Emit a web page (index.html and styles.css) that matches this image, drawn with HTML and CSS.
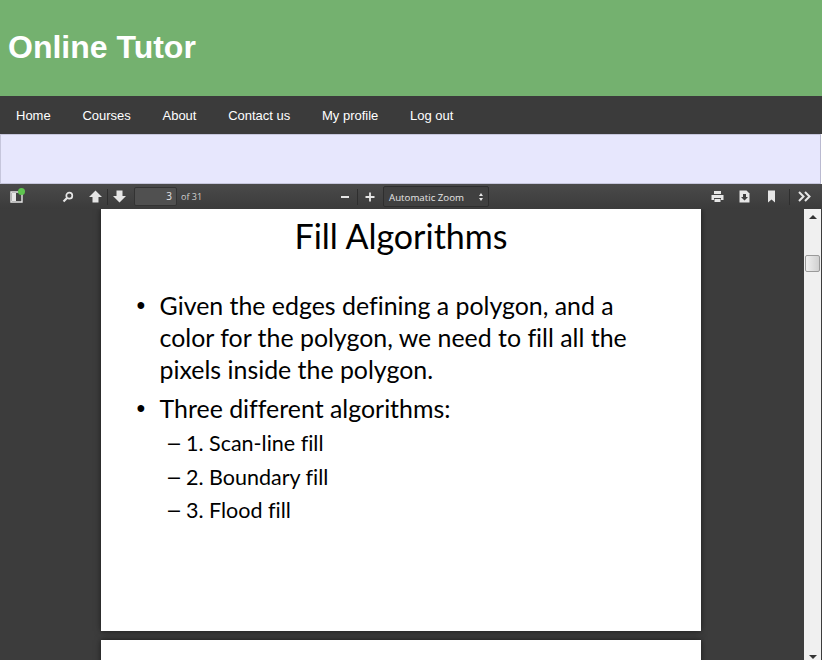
FILE: index.html
```html
<!DOCTYPE html>
<html>
<head>
    <meta charset="utf-8">
    <title>Online Tutor</title>
    <link rel="stylesheet" href="styles.css">
</head>
<body>
    <div class="header">
        <h1>Online Tutor</h1>
    </div>

    <ul class="nav">
        <li><a href="#">Home</a></li>
        <li><a href="#">Courses</a></li>
        <li><a href="#">About</a></li>
        <li><a href="#">Contact us</a></li>
        <li><a href="#">My profile</a></li>
        <li><a href="#">Log out</a></li>
    </ul>

    <div class="notice"></div>

    <div class="viewer">
        <div class="toolbar">
            <div class="tool-group tool-left">
                <button class="tool sidebar-btn">
                    <svg width="13" height="13" viewBox="0 0 13 13"><path d="M1 2h11v10H1z" fill="none" stroke="#e6e6e6" stroke-width="1.4"/><path d="M2 3h4v8H2z" fill="#e6e6e6"/></svg>
                    <span class="dot"></span>
                </button>
                <button class="tool search-btn">
                    <svg width="12" height="12" viewBox="0 0 12 12"><circle cx="7.3" cy="4.7" r="3" fill="none" stroke="#e6e6e6" stroke-width="1.7"/><path d="M5 7L1.5 10.5" stroke="#e6e6e6" stroke-width="2.2"/></svg>
                </button>
                <button class="tool up-btn">
                    <svg width="13" height="13" viewBox="0 0 13 13"><path d="M6.5 0.5L13 7H9.5V12.5H3.5V7H0z" fill="#e6e6e6"/></svg>
                </button>
                <span class="sep"></span>
                <button class="tool down-btn">
                    <svg width="13" height="13" viewBox="0 0 13 13"><path d="M6.5 12.5L13 6H9.5V0.5H3.5V6H0z" fill="#e6e6e6"/></svg>
                </button>
                <div class="page-input">3</div>
                <span class="page-count">of 31</span>
            </div>
            <div class="tool-group tool-mid">
                <button class="tool zoom-btn">
                    <svg width="10" height="10" viewBox="0 0 10 10"><path d="M1 5h8" stroke="#e6e6e6" stroke-width="2"/></svg>
                </button>
                <span class="sep"></span>
                <button class="tool zoom-btn">
                    <svg width="10" height="10" viewBox="0 0 10 10"><path d="M0.5 5h9M5 0.5v9" stroke="#e6e6e6" stroke-width="1.8"/></svg>
                </button>
                <div class="zoom-select">
                    <span>Automatic Zoom</span>
                    <span class="select-arrows"></span>
                </div>
            </div>
            <div class="tool-group tool-right">
                <button class="tool">
                    <svg width="13" height="13" viewBox="0 0 13 13"><path d="M3 1h7v3H3z" fill="#e6e6e6"/><path d="M0.5 5h12v5H10V8H3v2H0.5z" fill="#e6e6e6"/><path d="M3.5 9h6v3h-6z" fill="#e6e6e6"/></svg>
                </button>
                <button class="tool">
                    <svg width="13" height="13" viewBox="0 0 13 13"><path d="M1.5 0.5H8.5L11.5 3.5V12.5H1.5z" fill="#e6e6e6"/><path d="M5 4h3v3h2L6.5 10.5 3 7h2z" fill="#3d3d3d"/></svg>
                </button>
                <button class="tool">
                    <svg width="13" height="13" viewBox="0 0 13 13"><path d="M3 0.5h7v12L6.5 9.5 3 12.5z" fill="#e6e6e6"/></svg>
                </button>
                <span class="sep"></span>
                <button class="tool">
                    <svg width="13" height="13" viewBox="0 0 13 13"><path d="M1 2l4.5 4.5L1 11M7 2l4.5 4.5L7 11" fill="none" stroke="#e6e6e6" stroke-width="2"/></svg>
                </button>
            </div>
        </div>

        <div class="viewer-body">
            <div class="pages">
                <div class="page">
                    <h2>Fill Algorithms</h2>
                    <ul class="bullets">
                        <li>Given the edges defining a polygon, and a color for the polygon, we need to fill all the pixels inside the polygon.</li>
                        <li>Three different algorithms:
                            <ul class="sub-bullets">
                                <li>1. Scan-line fill</li>
                                <li>2. Boundary fill</li>
                                <li>3. Flood fill</li>
                            </ul>
                        </li>
                    </ul>
                </div>
                <div class="page"></div>
            </div>
            <div class="scrollbar">
                <span class="arrow arrow-up"></span>
                <span class="thumb"></span>
                <span class="arrow arrow-down"></span>
            </div>
        </div>
    </div>
</body>
</html>
```

FILE: styles.css
```css
html, body {
    margin: 0;
    height: 660px;
    overflow: hidden;
    font-family: "Liberation Sans", Arial, sans-serif;
}

.header {
    height: 96px;
    background-color: #74b16f;
    box-sizing: border-box;
    padding: 31px 8px 0;
}

.header h1 {
    margin: 0;
    font-size: 32px;
    line-height: 32px;
    color: #fff;
}

.nav {
    display: flex;
    height: 38px;
    margin: 0;
    padding: 0;
    list-style: none;
    background-color: #3b3b3b;
}

.nav a {
    display: block;
    padding: 0 15.7px 0 16px;
    font-size: 13px;
    line-height: 39px;
    color: #fff;
    text-decoration: none;
}

.notice {
    height: 48px;
    margin-right: 1px;
    background-color: #e7e7fd;
    border: 1px solid #c6c6dc;
    border-right-color: #b9b9d0;
}

.viewer {
    height: 476px;
    display: flex;
    flex-direction: column;
    background-color: #3c3c3c;
}

.toolbar {
    display: flex;
    justify-content: space-between;
    align-items: center;
    height: 25px;
    flex: none;
    background: linear-gradient(#4a4a4a, #3b3b3b);
}

.tool-group {
    display: flex;
    align-items: center;
}

.tool-left {
    padding-left: 10px;
}

.tool-right {
    padding-right: 11px;
}

.tool {
    display: flex;
    align-items: center;
    justify-content: center;
    position: relative;
    width: 13px;
    height: 25px;
    padding: 0;
    border: 0;
    background: none;
}

.sidebar-btn {
    margin-right: 38px;
}

.search-btn {
    margin-right: 15px;
}

.down-btn {
    margin-right: 8px;
}

.dot {
    position: absolute;
    top: 4px;
    left: 8px;
    width: 7px;
    height: 7px;
    border-radius: 50%;
    background-color: #5ec44f;
}

.sep {
    width: 1px;
    height: 16px;
    margin: 0 5px;
    background-color: #2e2e2e;
}

.page-input {
    width: 37px;
    height: 17px;
    padding-right: 4px;
    background-color: #505050;
    border: 1px solid #333;
    border-radius: 2px;
    font-family: "Open Sans", sans-serif;
    font-size: 10px;
    line-height: 17px;
    text-align: right;
    color: #e6e6e6;
}

.page-count {
    margin-left: 4px;
    font-family: "Open Sans", sans-serif;
    font-size: 9px;
    color: #d0d0d0;
}

.tool-mid {
    margin-left: -70px;
}

.zoom-btn {
    width: 10px;
}

.tool-mid .sep {
    margin: 0 7px;
}

.zoom-select {
    display: flex;
    justify-content: space-between;
    align-items: center;
    box-sizing: border-box;
    width: 106px;
    height: 21px;
    margin-left: 8px;
    padding: 1px 5px 0 5px;
    background-color: #404040;
    border: 1px solid #2e2e2e;
    border-radius: 2px;
    font-family: "Open Sans", sans-serif;
    font-size: 9.7px;
    color: #e6e6e6;
}

.select-arrows {
    width: 0;
    height: 8px;
    border-left: 2px solid transparent;
    border-right: 2px solid transparent;
    position: relative;
}

.select-arrows::before,
.select-arrows::after {
    content: "";
    position: absolute;
    left: -2px;
    border-left: 2px solid transparent;
    border-right: 2px solid transparent;
}

.select-arrows::before {
    top: 0;
    border-bottom: 3px solid #e6e6e6;
}

.select-arrows::after {
    bottom: 0;
    border-top: 3px solid #e6e6e6;
}

.tool-right .tool {
    margin-left: 14px;
}

.tool-right .sep {
    margin: 0 -6px 0 11px;
}

.viewer-body {
    display: flex;
    flex: 1;
    min-height: 0;
}

.pages {
    flex: 1;
    overflow: hidden;
    padding-right: 2px;
}

.page {
    width: 600px;
    height: 422px;
    margin: 0 auto 9px;
    box-sizing: border-box;
    padding-top: 7px;
    background-color: #fff;
    box-shadow: 0 0 6px rgba(0, 0, 0, 0.55);
    font-family: Lato, sans-serif;
    font-variant-ligatures: none;
    color: #000;
}

.page h2 {
    margin: 0;
    font-size: 34px;
    line-height: 40px;
    font-weight: 400;
    text-align: center;
}

.bullets {
    list-style: none;
    margin: 33px 0 0;
    padding: 0 70px 0 58.6px;
    font-size: 24.9px;
    line-height: 32px;
}

.bullets > li {
    margin-bottom: 7px;
    position: relative;
}

.bullets > li::before {
    content: "\2022";
    position: absolute;
    left: -23px;
    font-family: "Liberation Sans", sans-serif;
}

.sub-bullets {
    list-style: none;
    margin: 6px 0 0;
    padding: 0 0 0 26.4px;
    font-size: 21.5px;
    line-height: 27px;
}

.sub-bullets li {
    margin-bottom: 6.5px;
    position: relative;
}

.sub-bullets li::before {
    content: "\2013";
    position: absolute;
    left: -18px;
    font-family: "Liberation Sans", sans-serif;
}

.scrollbar {
    display: flex;
    flex-direction: column;
    align-items: center;
    width: 17px;
    margin-right: 1px;
    background-color: #f0f0f0;
    position: relative;
}

.arrow {
    position: absolute;
    border-left: 4px solid transparent;
    border-right: 4px solid transparent;
}

.arrow-up {
    top: 6px;
    border-bottom: 4px solid #333;
}

.arrow-down {
    bottom: 1px;
    border-top: 4px solid #333;
}

.thumb {
    position: absolute;
    top: 46px;
    left: 1px;
    width: 13px;
    height: 15px;
    background: linear-gradient(90deg, #f0f0f0, #d0d0d0);
    border: 1px solid #9a9a9a;
    border-radius: 2px;
}
```
